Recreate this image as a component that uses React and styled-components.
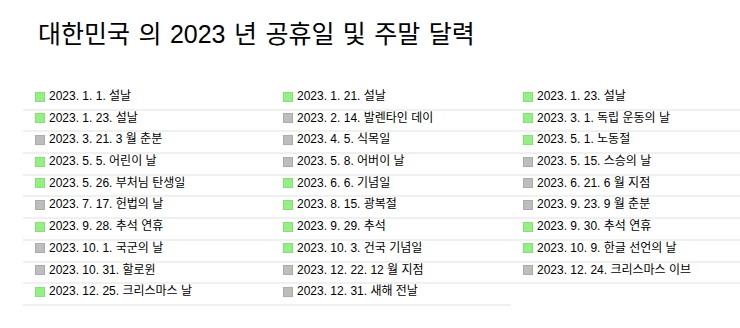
import React from 'react'
import styled, { createGlobalStyle } from 'styled-components'

const GlobalStyle = createGlobalStyle`
  html, body {
    margin: 0;
    padding: 0;
    background: #fff;
    overflow: hidden;
  }
  body {
    font-family: 'Liberation Sans', 'Noto Sans CJK KR', sans-serif;
    color: #000;
  }
`

const Page = styled.div`
  width: 740px;
  height: 328px;
  padding-top: 20px;
  box-sizing: border-box;
`

const Title = styled.h1`
  margin: 0 0 41px 38px;
  font-size: 25px;
  font-weight: normal;
  line-height: 28px;
  word-spacing: 1.5px;
  font-family: 'Liberation Sans', 'Noto Sans CJK KR', sans-serif;
`

const HolidayGrid = styled.ul`
  list-style: none;
  margin: 0;
  padding: 0 0 0 23px;
  display: grid;
  grid-template-columns: 248px 240px 1fr;
`

const HolidayRow = styled.li`
  display: flex;
  align-items: center;
  height: 15px;
  padding: 0 0 4.7px 12px;
  border-bottom: 2px solid #f0f0f0;
  font-size: 12px;
  line-height: 15px;
  white-space: nowrap;
`

const Swatch = styled.span`
  width: 10px;
  height: 10px;
  margin-right: 4px;
  flex: none;
  box-sizing: border-box;
  background: ${p => (p.$off ? '#95ef85' : '#bdbdbb')};
  border: 1px solid ${p => (p.$off ? '#86e077' : '#acacaa')};
`

const holidays = [
  ['2023. 1. 1. 설날', true],
  ['2023. 1. 21. 설날', true],
  ['2023. 1. 23. 설날', true],
  ['2023. 1. 23. 설날', true],
  ['2023. 2. 14. 발렌타인 데이', false],
  ['2023. 3. 1. 독립 운동의 날', true],
  ['2023. 3. 21. 3 월 춘분', false],
  ['2023. 4. 5. 식목일', false],
  ['2023. 5. 1. 노동절', true],
  ['2023. 5. 5. 어린이 날', true],
  ['2023. 5. 8. 어버이 날', false],
  ['2023. 5. 15. 스승의 날', false],
  ['2023. 5. 26. 부처님 탄생일', true],
  ['2023. 6. 6. 기념일', true],
  ['2023. 6. 21. 6 월 지점', false],
  ['2023. 7. 17. 헌법의 날', false],
  ['2023. 8. 15. 광복절', true],
  ['2023. 9. 23. 9 월 춘분', false],
  ['2023. 9. 28. 추석 연휴', true],
  ['2023. 9. 29. 추석', true],
  ['2023. 9. 30. 추석 연휴', true],
  ['2023. 10. 1. 국군의 날', false],
  ['2023. 10. 3. 건국 기념일', true],
  ['2023. 10. 9. 한글 선언의 날', true],
  ['2023. 10. 31. 할로윈', false],
  ['2023. 12. 22. 12 월 지점', false],
  ['2023. 12. 24. 크리스마스 이브', false],
  ['2023. 12. 25. 크리스마스 날', true],
  ['2023. 12. 31. 새해 전날', false],
]

export default function App() {
  return (
    <Page>
      <GlobalStyle />
      <Title>대한민국 의 2023 년 공휴일 및 주말 달력</Title>
      <HolidayGrid>
        {holidays.map(([label, off], i) => (
          <HolidayRow key={i}>
            <Swatch $off={off} />
            {label}
          </HolidayRow>
        ))}
      </HolidayGrid>
    </Page>
  )
}
